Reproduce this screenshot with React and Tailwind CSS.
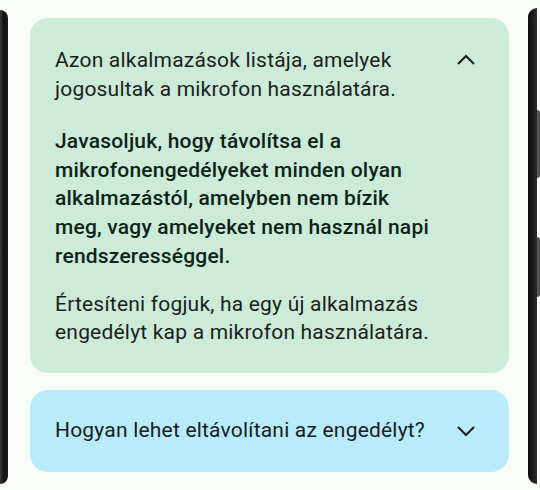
import React from 'react';

const font = { fontFamily: 'Roboto, "Noto Sans", sans-serif' };

const Chevron = ({ up }) => (
  <svg width="30" height="30" viewBox="0 0 30 30" className="shrink-0">
    <path
      d={up ? 'M7 19 L15 11 L23 19' : 'M7 11 L15 19 L23 11'}
      fill="none"
      stroke="#1a2420"
      strokeWidth="2.2"
    />
  </svg>
);

// left / right edges of the phone body
const LeftEdge = () => (
  <div className="w-[8px] shrink-0 mt-[10px] mb-[6px] rounded-tr-[14px] rounded-br-[14px] bg-gradient-to-r from-[#3a3a3a] via-[#111] to-[#1c1c1c]" />
);

const RightEdge = () => (
  <div className="w-[12px] shrink-0 mt-[8px] mb-[6px] flex">
    <div className="w-[9px] rounded-tl-[12px] rounded-bl-[12px] bg-gradient-to-r from-[#0d0d0d] via-[#1a1a1a] to-[#2e2e2e]" />
    <div className="flex-1 flex flex-col pt-[102px]">
      <div className="h-[68px] bg-[#555] rounded-r-sm" />
      <div className="h-[59px]" />
      <div className="h-[60px] bg-[#555] rounded-r-sm" />
    </div>
  </div>
);

export default function App() {
  return (
    <div className="w-[540px] h-[490px] flex bg-[#f9fbf6] overflow-hidden" style={font}>
      <LeftEdge />
      <div className="flex-1 flex flex-col pl-[22px] pr-[19px] pt-[18px] gap-[17px]">
        <div className="rounded-[18px] bg-[#cdebd9] pl-[25px] pr-[28px] pt-[28px] pb-[26px]">
          <div className="flex items-start justify-between">
            <p className="text-[21px] leading-[28.5px] text-[#1b1f1c] tracking-[0.2px]">
              Azon alkalmazások listája, amelyek
              <br />
              jogosultak a mikrofon használatára.
            </p>
            <div className="-mt-[1px]">
              <Chevron up />
            </div>
          </div>
          <p className="mt-[24px] text-[21px] leading-[28.7px] font-medium text-[#0e2318] tracking-[0.2px]">
            Javasoljuk, hogy távolítsa el a
            <br />
            mikrofonengedélyeket minden olyan
            <br />
            alkalmazástól, amelyben nem bízik
            <br />
            meg, vagy amelyeket nem használ napi
            <br />
            rendszerességgel.
          </p>
          <p className="mt-[19px] text-[21px] leading-[28.5px] text-[#1b1f1c] tracking-[0.2px]">
            Értesíteni fogjuk, ha egy új alkalmazás
            <br />
            engedélyt kap a mikrofon használatára.
          </p>
        </div>
        <div className="rounded-[18px] bg-[#b8ecfd] h-[82px] pl-[25px] pr-[28px] flex items-center justify-between">
          <span className="text-[21px] text-[#161d20] tracking-[0.2px]">
            Hogyan lehet eltávolítani az engedélyt?
          </span>
          <Chevron />
        </div>
      </div>
      <RightEdge />
    </div>
  );
}
